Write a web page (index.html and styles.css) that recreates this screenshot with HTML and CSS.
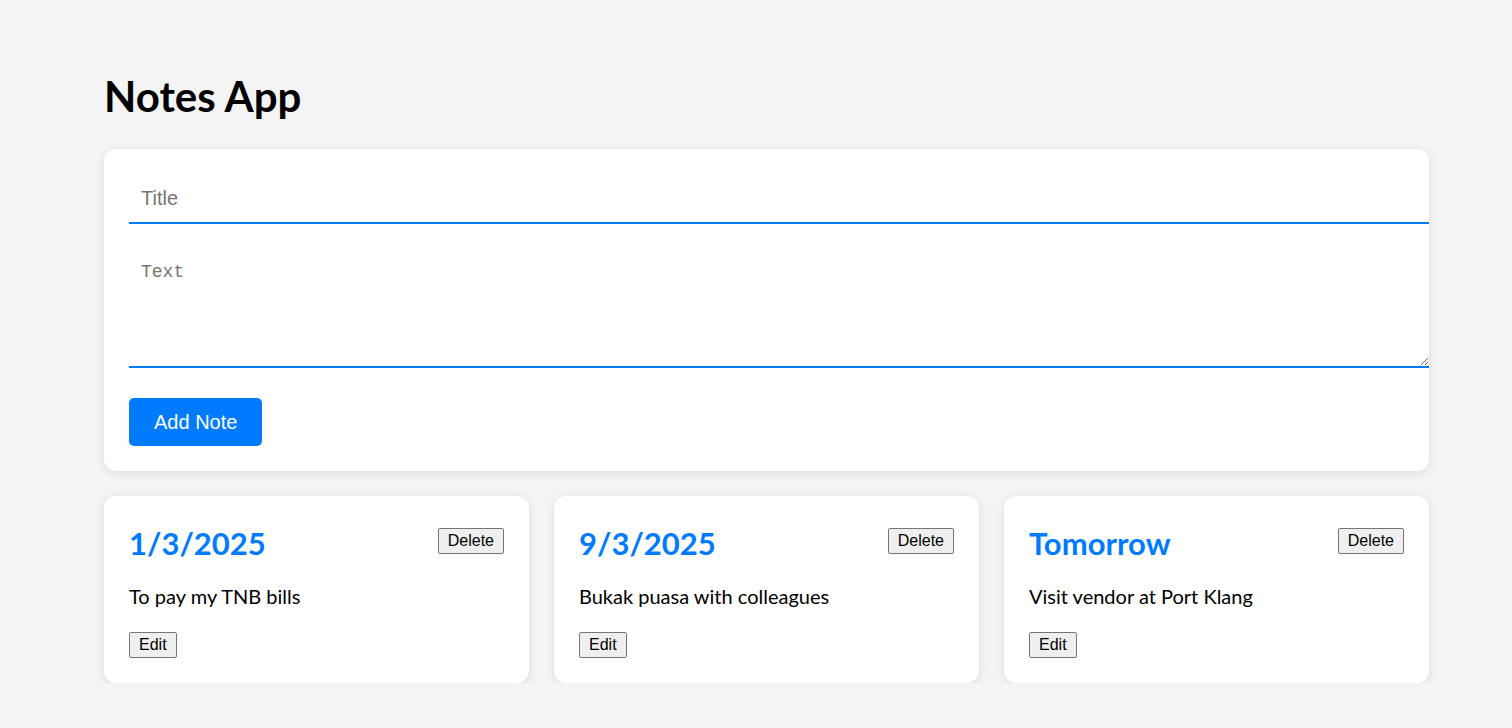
FILE: index.html
```html
<!DOCTYPE html>
<html>
<head>
<meta charset="utf-8">
<title>Notes App</title>
<link rel="stylesheet" href="styles.css">
</head>
<body>
<div class="app">
  <h1 class="app-title">Notes App</h1>
  <form class="note-form card">
    <input class="field field-title" type="text" placeholder="Title">
    <textarea class="field field-text" placeholder="Text"></textarea>
    <button class="add-btn" type="button">Add Note</button>
  </form>
  <div class="notes">
    <div class="note card">
      <div class="note-head">
        <h2 class="note-title">1/3/2025</h2>
        <button class="small-btn">Delete</button>
      </div>
      <p class="note-text">To pay my TNB bills</p>
      <button class="small-btn">Edit</button>
    </div>
    <div class="note card">
      <div class="note-head">
        <h2 class="note-title">9/3/2025</h2>
        <button class="small-btn">Delete</button>
      </div>
      <p class="note-text">Bukak puasa with colleagues</p>
      <button class="small-btn">Edit</button>
    </div>
    <div class="note card">
      <div class="note-head">
        <h2 class="note-title">Tomorrow</h2>
        <button class="small-btn">Delete</button>
      </div>
      <p class="note-text">Visit vendor at Port Klang</p>
      <button class="small-btn">Edit</button>
    </div>
  </div>
</div>
</body>
</html>
```
FILE: styles.css
```css
* { box-sizing: border-box; }
body {
  margin: 0;
  background: #f4f4f4;
  font-family: Lato, "Noto Sans", sans-serif;
  color: #000;
}
.app {
  width: 1325px;
  margin-left: 104px;
  padding-top: 72px;
}
.app-title {
  margin: 0 0 29px;
  font-size: 42px;
  line-height: 48px;
  font-weight: 700;
}
.card {
  background: #fff;
  border-radius: 12px;
  box-shadow: 0 2px 10px rgba(0, 0, 0, 0.1);
  padding: 25px;
}
.note-form {
  display: flex;
  flex-direction: column;
  align-items: flex-start;
}
.field {
  display: block;
  width: calc(100% + 25px);
  border: none;
  border-bottom: 2px solid #007bff;
  outline: none;
  background: #fff;
  padding: 12px;
  color: #000;
}
.field::placeholder { color: #757575; }
.field-title {
  height: 50px;
  font-family: "Liberation Sans", Arial, sans-serif;
  font-size: 20px;
}
.field-text {
  margin-top: 26px;
  height: 118px;
  font-family: "Liberation Mono", monospace;
  font-size: 18px;
  line-height: 21px;
  resize: vertical;
}
.add-btn {
  margin-top: 30px;
  background: #007bff;
  color: #fff;
  border: none;
  border-radius: 5px;
  padding: 12px 25px;
  font-family: "Liberation Sans", Arial, sans-serif;
  font-size: 20px;
  line-height: 24px;
}
.notes {
  display: grid;
  grid-template-columns: repeat(3, 1fr);
  gap: 25px;
  margin-top: 25px;
}
.note-head {
  display: flex;
  justify-content: space-between;
  align-items: center;
  height: 40px;
}
.note-title {
  box-sizing: content-box;
  margin: 0;
  padding-top: 4px;
  color: #007bff;
  font-size: 31px;
  line-height: 40px;
  font-weight: 700;
}
.note-text {
  margin: 23px 0 24px;
  font-size: 20px;
  line-height: 24px;
}
.small-btn {
  font-family: "Liberation Sans", Arial, sans-serif;
  font-size: 16px;
  line-height: 18px;
  padding: 3px 9px;
  background: #efefef;
  border: 1px solid #767676;
  border-radius: 2px;
  color: #000;
}
```
